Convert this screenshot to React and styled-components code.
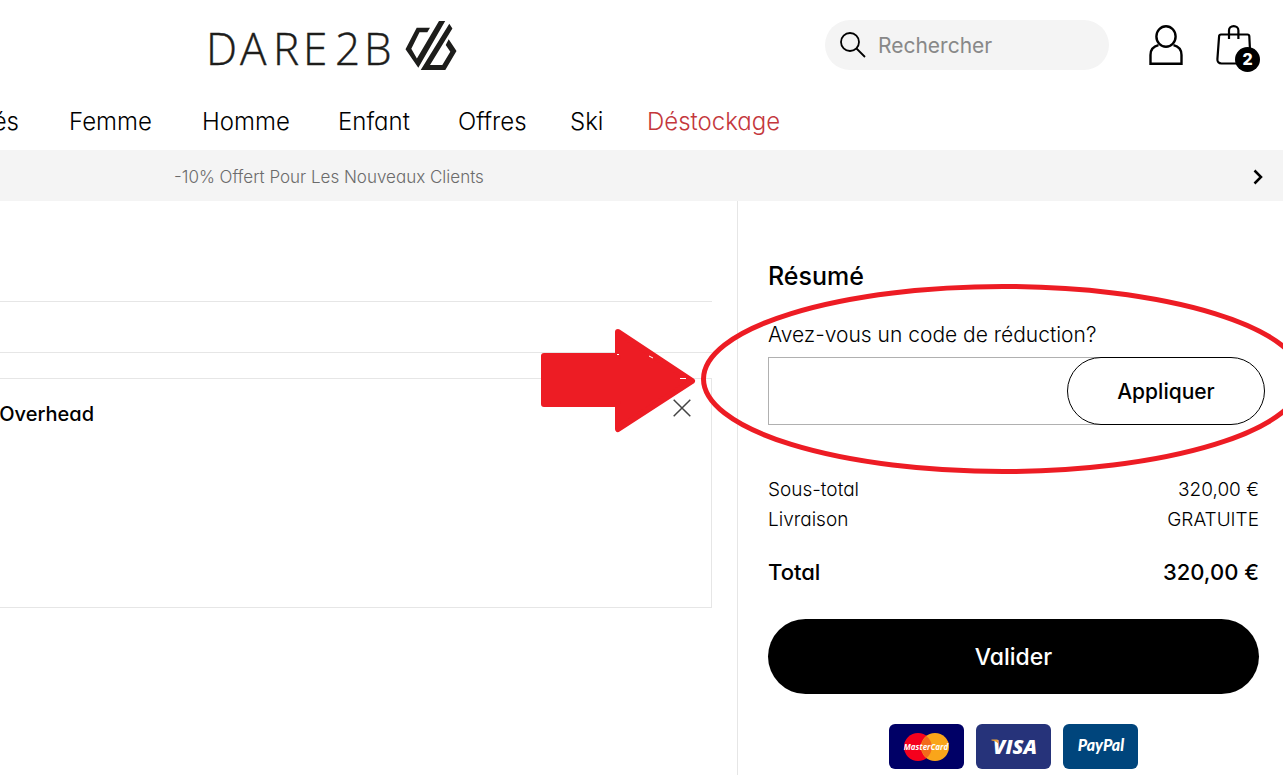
import React from "react";
import styled, { createGlobalStyle } from "styled-components";

const colors = {
  text: "#000000",
  muted: "#6b6b6b",
  placeholder: "#888888",
  sale: "#c4373c",
  grey: "#f4f4f4",
  line: "#e6e6e6",
  marker: "#ed1c24",
};

const GlobalStyle = createGlobalStyle`
  * {
    box-sizing: border-box;
  }

  body {
    margin: 0;
    background-color: #ffffff;
    color: ${colors.text};
    font-family: Inter, "Liberation Sans", sans-serif;
    font-feature-settings: "cv11";
    font-size: 20px;
    font-weight: 300;
  }

  button,
  input {
    font: inherit;
    font-feature-settings: inherit;
    color: inherit;
  }
`;

const Page = styled.div`
  min-height: 100vh;
  display: flex;
  flex-direction: column;
  overflow: hidden;
`;

const TopBar = styled.div`
  display: flex;
  align-items: center;
  height: 90px;
  padding: 0 23px 0 200px;
`;

const LogoLink = styled.a`
  display: block;
  height: 54px;

  svg {
    display: block;
  }
`;

const SearchForm = styled.form`
  display: flex;
  align-items: center;
  gap: 12px;
  width: 284px;
  height: 50px;
  margin-left: auto;
  padding: 0 15px;
  border-radius: 25px;
  background-color: ${colors.grey};
`;

const SearchInput = styled.input`
  flex: 1;
  min-width: 0;
  padding: 0;
  border: none;
  outline: none;
  background: none;
  font-size: 21px;
  font-weight: 400;

  &::placeholder {
    color: ${colors.placeholder};
    opacity: 1;
  }
`;

const IconButton = styled.button`
  display: block;
  padding: 0;
  border: none;
  background: none;
  line-height: 0;
  cursor: pointer;
`;

const AccountLink = styled.a`
  margin-left: 40px;
  line-height: 0;
  color: inherit;
`;

const CartLink = styled.a`
  position: relative;
  width: 44px;
  margin-left: 33px;
  line-height: 0;
  color: inherit;
`;

const CartCount = styled.span`
  position: absolute;
  right: 0;
  bottom: -7px;
  width: 25px;
  height: 25px;
  border-radius: 50%;
  background-color: #000000;
  color: #ffffff;
  font-size: 16px;
  font-weight: 800;
  line-height: 25px;
  text-align: center;
`;

const Nav = styled.nav`
  display: grid;
  grid-template-columns: 19px 83px 86px 70px 62px 27px auto;
  justify-content: start;
  align-items: center;
  gap: 50px;
  height: 60px;
  padding-top: 2px;
  font-size: 24px;
`;

const NavLink = styled.a`
  display: flex;
  justify-content: ${({ $cut }) => ($cut ? "flex-end" : "flex-start")};
  color: ${({ $sale }) => ($sale ? colors.sale : colors.text)};
  text-decoration: none;
  white-space: nowrap;
`;

const Promo = styled.div`
  display: flex;
  align-items: center;
  justify-content: space-between;
  height: 51px;
  padding: 2px 20px 0 174px;
  background-color: ${colors.grey};
  color: ${colors.muted};
  font-size: 17px;
`;

const Main = styled.main`
  flex: 1;
  display: grid;
  grid-template-columns: minmax(0, 1fr) 546px;
`;

const Cart = styled.section`
  padding-right: 25px;
`;

const CartRow = styled.div`
  height: ${({ $tall }) => ($tall ? "101px" : "51px")};
  border-bottom: 1px solid ${colors.line};
`;

const CartItem = styled.article`
  display: flex;
  align-items: flex-start;
  justify-content: space-between;
  height: 230px;
  margin-top: 25px;
  padding: 20px 20px 0 0;
  border: 1px solid ${colors.line};
  border-left: none;
`;

const ItemName = styled.h2`
  display: flex;
  justify-content: flex-end;
  width: 94px;
  margin: 0;
  font-size: 20px;
  font-weight: 500;
  line-height: 30px;
`;

const Summary = styled.aside`
  position: relative;
  padding: 60px 24px 6px 30px;
  border-left: 1px solid ${colors.line};
`;

const SummaryTitle = styled.h1`
  margin: 0;
  font-size: 25px;
  font-weight: 500;
  line-height: 30px;
`;

const PromoForm = styled.form`
  margin: 29px -6px 0 0;
`;

const PromoLabel = styled.label`
  display: block;
  font-size: 21px;
  line-height: 30px;
`;

const PromoField = styled.div`
  display: flex;
  height: 68px;
  margin-top: 7px;
`;

const PromoInput = styled.input`
  flex: 1;
  min-width: 0;
  margin-right: -34px;
  padding: 0 48px 0 16px;
  border: 1px solid #b0b0b0;
  border-radius: 0;
  outline: none;
`;

const ApplyButton = styled.button`
  z-index: 1;
  width: 198px;
  border: 1px solid #000000;
  border-radius: 34px;
  background-color: #ffffff;
  font-size: 21px;
  font-weight: 500;
  cursor: pointer;
`;

const Totals = styled.dl`
  margin: 50px 0 0;
`;

const TotalRow = styled.div`
  display: flex;
  justify-content: space-between;
  margin-top: ${({ $grand }) => ($grand ? "22px" : "0")};
  font-size: ${({ $grand }) => ($grand ? "22px" : "19px")};
  font-weight: ${({ $grand }) => ($grand ? 500 : 300)};
  line-height: 30px;

  dd {
    margin: 0;
  }
`;

const CheckoutButton = styled.button`
  display: block;
  width: 100%;
  height: 75px;
  margin-top: 32px;
  border: none;
  border-radius: 38px;
  background-color: #000000;
  color: #ffffff;
  font-size: 23px;
  font-weight: 500;
  cursor: pointer;
`;

const Payments = styled.div`
  display: flex;
  justify-content: center;
  gap: 12px;
  margin-top: 30px;
`;

const PaymentCard = styled.svg`
  width: 75px;
  height: 45px;
  border-radius: 6px;
  background-color: ${({ $color }) => $color};
  fill: #ffffff;
  font-style: italic;
  font-weight: 700;
`;

// lies over both columns, hung on the summary
const Marker = styled.svg`
  position: absolute;
  top: 79px;
  left: -201px;
  width: 780px;
  height: 200px;
  pointer-events: none;
`;

const navItems = ["Femme", "Homme", "Enfant", "Offres", "Ski"];

const Logo = () => (
  <svg width="260" height="54" viewBox="200 18 260 54" aria-hidden="true">
    <text
      x="206 240 273 303 335 364"
      y="65"
      fill="#1d1d1b"
      stroke="#1d1d1b"
      strokeWidth="0.400"
      fontFamily="Open Sans"
      fontSize="44"
      fontWeight="300"
    >
      DARE2B
    </text>
    <path
      fill="#1d1d1b"
      d="M405.500 49.200L416.700 27.700H430L427.300 32.300H419.500L411.300 48.800L416.900 58.600L439 21H445.200L418.300 67.700Z"
    />
    <path
      fill="#1d1d1b"
      d="M420.700 70L449.300 23.700L452.400 28.400L430 65H442.300L450.300 51.700L445.700 45L448.700 39.300L456.500 51L445.300 70Z"
    />
  </svg>
);

const SearchIcon = () => (
  <svg width="26" height="26" viewBox="0 0 26 26" fill="none" stroke="#000" strokeWidth="1.800">
    <circle cx="10" cy="10" r="9" />
    <path d="M16.500 16.500l8.500 8.500" />
  </svg>
);

const UserIcon = () => (
  <svg width="34" height="42" viewBox="0 0 34 42" fill="none" stroke="#000" strokeWidth="2.400">
    <ellipse cx="17" cy="12.500" rx="9.600" ry="10.300" />
    <path d="M9.500 21.200C4 22.500 1.500 26 1.500 31v8.800h31V31c0-5-2.500-8.500-8-9.800" />
  </svg>
);

const BagIcon = () => (
  <svg width="36" height="40" viewBox="0 0 36 40" fill="none" stroke="#000" strokeWidth="2.200">
    <path d="M5 9.500h26.500c1 0 1.700.6 1.800 1.600l1.200 24c.1 2.200-1 3.400-3.200 3.400H5.500c-2.800 0-4.300-1.600-4.100-4.400l1.700-23c.1-1 .9-1.600 1.900-1.600z" />
    <path d="M13 14V5.500C13 3 15 1.200 17.700 1.200s4.700 1.800 4.700 4.300V14" />
  </svg>
);

const App = () => {
  return (
    <Page>
      <GlobalStyle />
      <header>
        <TopBar>
          <LogoLink href="#" aria-label="Dare 2b">
            <Logo />
          </LogoLink>
          <SearchForm role="search">
            <IconButton type="button" aria-label="Lancer la recherche">
              <SearchIcon />
            </IconButton>
            <SearchInput type="search" placeholder="Rechercher" aria-label="Rechercher" />
          </SearchForm>
          <AccountLink href="#" aria-label="Mon compte">
            <UserIcon />
          </AccountLink>
          <CartLink href="#" aria-label="Panier">
            <BagIcon />
            <CartCount>2</CartCount>
          </CartLink>
        </TopBar>
        <Nav>
          <NavLink href="#" $cut>
            és
          </NavLink>
          {navItems.map((item) => (
            <NavLink key={item} href="#">
              {item}
            </NavLink>
          ))}
          <NavLink href="#" $sale>
            Déstockage
          </NavLink>
        </Nav>
      </header>

      <Promo>
        <span>-10% Offert Pour Les Nouveaux Clients</span>
        <IconButton type="button" aria-label="Suivant">
          <svg width="10" height="16" viewBox="0 0 10 16" fill="none" stroke="#000" strokeWidth="2.500">
            <path d="M1.500 1.500L8 8l-6.500 6.500" />
          </svg>
        </IconButton>
      </Promo>

      <Main>
        <Cart>
          <CartRow $tall />
          <CartRow />
          <CartItem>
            <ItemName>Overhead</ItemName>
            <IconButton type="button" aria-label="Supprimer">
              <svg width="18" height="18" viewBox="0 0 18 18" fill="none" stroke="#444" strokeWidth="1.500">
                <path d="M.7.7l16.600 16.600M17.300.7L.7 17.300" />
              </svg>
            </IconButton>
          </CartItem>
        </Cart>

        <Summary>
          <SummaryTitle>Résumé</SummaryTitle>
          <PromoForm>
            <PromoLabel htmlFor="code">Avez-vous un code de réduction?</PromoLabel>
            <PromoField>
              <PromoInput id="code" type="text" />
              <ApplyButton type="button">Appliquer</ApplyButton>
            </PromoField>
          </PromoForm>
          <Totals>
            <TotalRow>
              <dt>Sous-total</dt>
              <dd>320,00 €</dd>
            </TotalRow>
            <TotalRow>
              <dt>Livraison</dt>
              <dd>GRATUITE</dd>
            </TotalRow>
            <TotalRow $grand>
              <dt>Total</dt>
              <dd>320,00 €</dd>
            </TotalRow>
          </Totals>
          <CheckoutButton type="button">Valider</CheckoutButton>
          <Payments>
            <PaymentCard $color="#000066" viewBox="0 0 75 45">
              <circle cx="29" cy="23" r="14" fill="#f5001d" />
              <circle cx="46" cy="23" r="14" fill="#f9a51a" />
              <path d="M37.500 12a14 14 0 0 1 0 22 14 14 0 0 1 0-22z" fill="#f26a1b" />
              <text x="37" y="26" textAnchor="middle" fontFamily="Open Sans" fontSize="8">
                MasterCard
              </text>
            </PaymentCard>
            <PaymentCard $color="#26337a" viewBox="0 0 75 45">
              <text x="39" y="30" textAnchor="middle" fontFamily="Open Sans" fontSize="20" fontWeight="800">
                VISA
              </text>
              <path d="M15.500 15.500h6l2 6c-1.500-3-4-4.500-8-5z" fill="#e8a33d" />
            </PaymentCard>
            <PaymentCard $color="#00457c" viewBox="0 0 75 45">
              <text x="38" y="27" textAnchor="middle" fontFamily="Lato" fontSize="16" fontWeight="900">
                PayPal
              </text>
            </PaymentCard>
          </Payments>
          <Marker viewBox="537 280 780 200" aria-hidden="true">
            <path
              d="M544 356h74v-24l74 49-74 48v-25h-74z"
              fill={colors.marker}
              stroke={colors.marker}
              strokeWidth="6"
              strokeLinejoin="round"
            />
            <path d="M680 378.500h6M649 356l4 2M617 354.500h2" stroke="#ffffff" />
            <ellipse
              cx="1003"
              cy="379"
              rx="299.500"
              ry="92.500"
              fill="none"
              stroke={colors.marker}
              strokeWidth="5"
            />
          </Marker>
        </Summary>
      </Main>
    </Page>
  );
};

export default App;
